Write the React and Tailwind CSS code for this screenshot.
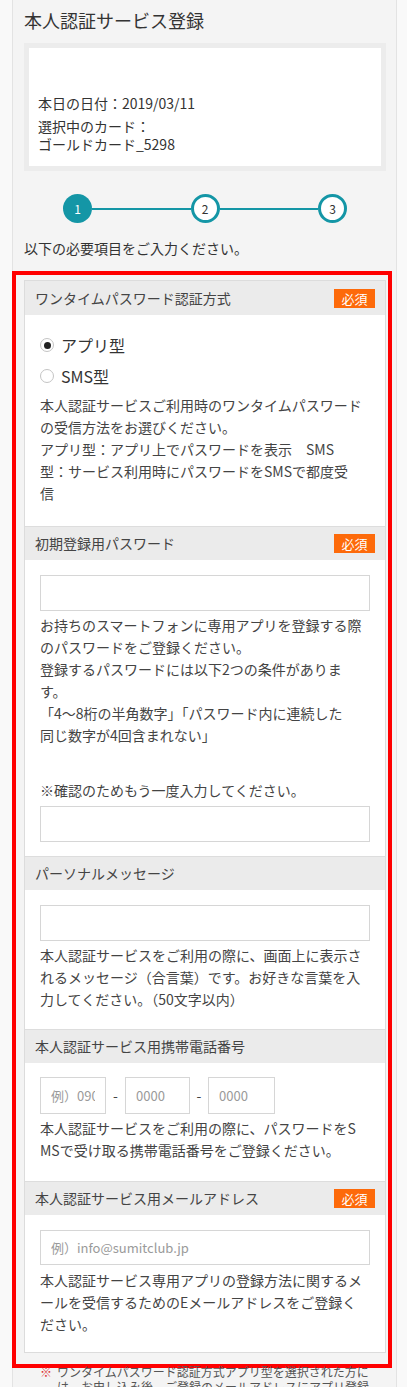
import React from 'react';

const Required = () => (
  <span className="flex h-[19px] w-[41px] items-center justify-center bg-[#fd6a0a] text-[13px] leading-none text-white">
    必須
  </span>
);

function SectionHeader({ title, required, first }) {
  return (
    <div
      className={`flex h-[34px] items-center justify-between bg-[#ebebeb] pl-[10px] pr-[10px] text-[14px] text-[#444] ${
        first ? '' : 'border-t border-[#dddddd]'
      }`}
    >
      <span>{title}</span>
      {required && <Required />}
    </div>
  );
}

function Radio({ label, checked }) {
  return (
    <label className="flex h-[24px] items-center gap-[7px] text-[16px] text-[#333]">
      <span className="flex h-[14px] w-[14px] items-center justify-center rounded-full border border-[#c4c4c4] bg-white">
        {checked && <span className="h-[7px] w-[7px] rounded-full bg-[#222]" />}
      </span>
      {label}
    </label>
  );
}

const TextInput = ({ placeholder = '', className = '' }) => (
  <input
    type="text"
    placeholder={placeholder}
    className={`block border border-[#d6d6d6] bg-white px-[10px] text-[13px] text-[#333] outline-none placeholder:text-[#9a9a9a] ${className}`}
  />
);

function Step({ n, active }) {
  return active ? (
    <span className="flex h-[29px] w-[29px] shrink-0 items-center justify-center rounded-full bg-[#1496a6] text-[12px] text-white">
      {n}
    </span>
  ) : (
    <span className="flex h-[29px] w-[29px] shrink-0 items-center justify-center rounded-full border-[3px] border-[#1496a6] bg-white text-[12px] text-[#333]">
      {n}
    </span>
  );
}

export default function App() {
  return (
    <div className="min-h-screen bg-[#f9f9f9] font-['Noto_Sans_CJK_JP','Noto_Sans',sans-serif] text-[#333]">
      <div className="ml-[12px] mr-[10px] min-h-screen border-x border-[#e3e3e3] bg-[#f4f4f4] pl-[11px] pr-[10px] pt-[8px] pb-[40px]">
        <h1 className="text-[18px] leading-[24px] text-[#333]">本人認証サービス登録</h1>

        <div className="mt-[11px] border-[5px] border-[#ececec] bg-white px-[9px] pt-[46px] pb-[13px] text-[14px] leading-[18px]">
          <p>本日の日付：2019/03/11</p>
          <p className="mt-[5px]">
            選択中のカード：
            <br />
            ゴールドカード_5298
          </p>
        </div>

        <div className="mx-auto mt-[23px] flex w-[284px] items-center">
          <Step n={1} active />
          <span className="h-[2px] flex-1 bg-[#1496a6]" />
          <Step n={2} />
          <span className="h-[2px] flex-1 bg-[#1496a6]" />
          <Step n={3} />
        </div>

        <p className="mt-[14px] text-[14px] leading-[22px]">以下の必要項目をご入力ください。</p>

        <div className="-ml-[12px] -mr-[6px] mt-[12px] border-4 border-[#ff0000] pl-[8px] pr-[2px] pt-[5px] pb-[11px]">
          <div className="border border-[#dcdcdc] bg-white">
            <SectionHeader title="ワンタイムパスワード認証方式" required first />
            <div className="px-[15px] pt-[18px] pb-[22px]">
              <Radio label="アプリ型" checked />
              <div className="mt-[7px]">
                <Radio label="SMS型" />
              </div>
              <p className="mt-[6px] text-[14px] leading-[22px] text-[#444]">
                本人認証サービスご利用時のワンタイムパスワード
                <br />
                の受信方法をお選びください。
                <br />
                アプリ型：アプリ上でパスワードを表示　SMS
                <br />
                型：サービス利用時にパスワードをSMSで都度受
                <br />
                信
              </p>
            </div>

            <SectionHeader title="初期登録用パスワード" required />
            <div className="px-[15px] pt-[15px] pb-[14px]">
              <TextInput className="h-[36px] w-full" />
              <p className="mt-[3px] text-[14px] leading-[22px] text-[#444]">
                お持ちのスマートフォンに専用アプリを登録する際
                <br />
                のパスワードをご登録ください。
                <br />
                登録するパスワードには以下2つの条件がありま
                <br />
                す。
                <br />
                「4〜8桁の半角数字」「パスワード内に連続した
                <br />
                同じ数字が4回含まれない」
              </p>
              <p className="mt-[33px] text-[14px] leading-[22px] text-[#444]">※確認のためもう一度入力してください。</p>
              <TextInput className="mt-[5px] h-[36px] w-full" />
            </div>

            <SectionHeader title="パーソナルメッセージ" />
            <div className="px-[15px] pt-[15px] pb-[19px]">
              <TextInput className="h-[36px] w-full" />
              <p className="mt-[3px] text-[14px] leading-[22px] text-[#444]">
                本人認証サービスをご利用の際に、画面上に表示さ
                <br />
                れるメッセージ（合言葉）です。お好きな言葉を入
                <br />
                力してください。（50文字以内）
              </p>
            </div>

            <SectionHeader title="本人認証サービス用携帯電話番号" />
            <div className="px-[15px] pt-[14px] pb-[20px]">
              <div className="flex h-[37px] items-center text-[14px] text-[#444]">
                <TextInput placeholder="例）090" className="h-[37px] w-[66px]" />
                <span className="w-[19px] text-center">-</span>
                <TextInput placeholder="0000" className="h-[37px] w-[65px]" />
                <span className="w-[18px] text-center">-</span>
                <TextInput placeholder="0000" className="h-[37px] w-[67px]" />
              </div>
              <p className="mt-[3px] text-[14px] leading-[22px] text-[#444]">
                本人認証サービスをご利用の際に、パスワードをS
                <br />
                MSで受け取る携帯電話番号をご登録ください。
              </p>
            </div>

            <SectionHeader title="本人認証サービス用メールアドレス" required />
            <div className="px-[15px] pt-[15px] pb-[17px]">
              <TextInput placeholder="例）info@sumitclub.jp" className="h-[35px] w-full" />
              <p className="mt-[4px] text-[14px] leading-[22px] text-[#444]">
                本人認証サービス専用アプリの登録方法に関するメ
                <br />
                ールを受信するためのEメールアドレスをご登録く
                <br />
                ださい。
              </p>
            </div>
          </div>
        </div>

        <div className="-mt-[4px] flex pl-[16px] text-[12px] leading-[15px] text-[#555]">
          <span className="w-[17px] shrink-0 text-[#d33]">※</span>
          <p>
            ワンタイムパスワード認証方式アプリ型を選択された方に
            <br />
            は、お申し込み後、ご登録のメールアドレスにアプリ登録
          </p>
        </div>
      </div>
    </div>
  );
}
